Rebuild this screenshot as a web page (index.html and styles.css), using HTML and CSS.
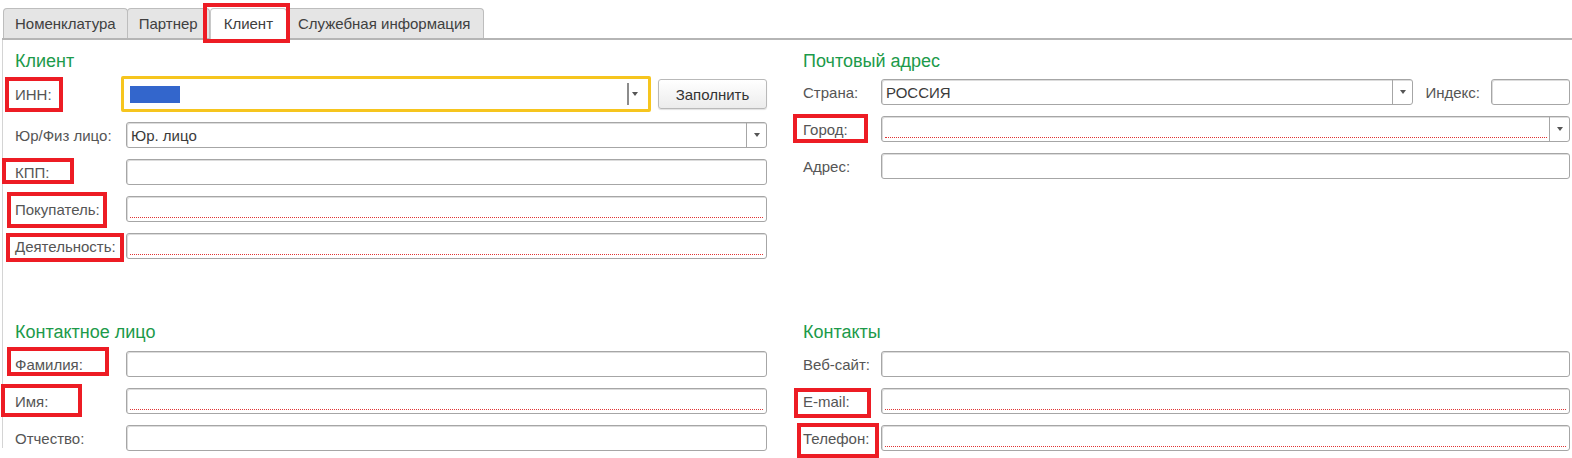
FILE: index.html
```html
<!DOCTYPE html>
<html lang="ru">
<head>
  <meta charset="UTF-8">
  <title>Клиент</title>
  <link rel="stylesheet" href="styles.css">
</head>
<body>
  <div class="page">
    <div class="tabs">
      <div class="tab">Номенклатура</div>
      <div class="tab">Партнер</div>
      <div class="tab active">Клиент</div>
      <div class="tab">Служебная информация</div>
    </div>

    <div class="panel">
      <!-- Клиент -->
      <div class="group group-left">
        <div class="group-title">Клиент</div>
        <div class="row row-inn">
          <div class="label">ИНН:</div>
          <div class="focus">
            <span class="selection"></span>
            <span class="dd dd-focus"><i class="arrow"></i></span>
          </div>
          <button class="btn">Заполнить</button>
        </div>
        <div class="row">
          <div class="label">Юр/Физ лицо:</div>
          <div class="field"><span class="value">Юр. лицо</span><span class="dd"><i class="arrow"></i></span></div>
        </div>
        <div class="row">
          <div class="label">КПП:</div>
          <div class="field"></div>
        </div>
        <div class="row">
          <div class="label">Покупатель:</div>
          <div class="field required"></div>
        </div>
        <div class="row">
          <div class="label">Деятельность:</div>
          <div class="field required"></div>
        </div>
      </div>

      <!-- Почтовый адрес -->
      <div class="group group-right">
        <div class="group-title">Почтовый адрес</div>
        <div class="row">
          <div class="label">Страна:</div>
          <div class="field"><span class="value">РОССИЯ</span><span class="dd"><i class="arrow"></i></span></div>
          <div class="label label-index">Индекс:</div>
          <div class="field field-index"></div>
        </div>
        <div class="row">
          <div class="label">Город:</div>
          <div class="field required with-dd"><span class="value"></span><span class="dd"><i class="arrow"></i></span></div>
        </div>
        <div class="row">
          <div class="label">Адрес:</div>
          <div class="field"></div>
        </div>
      </div>

      <!-- Контактное лицо -->
      <div class="group group-left">
        <div class="group-title title-low">Контактное лицо</div>
        <div class="row">
          <div class="label">Фамилия:</div>
          <div class="field"></div>
        </div>
        <div class="row">
          <div class="label">Имя:</div>
          <div class="field required"></div>
        </div>
        <div class="row">
          <div class="label">Отчество:</div>
          <div class="field"></div>
        </div>
      </div>

      <!-- Контакты -->
      <div class="group group-right">
        <div class="group-title title-low">Контакты</div>
        <div class="row">
          <div class="label">Веб-сайт:</div>
          <div class="field"></div>
        </div>
        <div class="row">
          <div class="label">E-mail:</div>
          <div class="field required"></div>
        </div>
        <div class="row">
          <div class="label">Телефон:</div>
          <div class="field required"></div>
        </div>
      </div>
    </div>

    <!-- пометки поверх формы -->
    <div class="mark mark-tab"></div>
    <div class="mark mark-inn"></div>
    <div class="mark mark-kpp"></div>
    <div class="mark mark-buyer"></div>
    <div class="mark mark-activity"></div>
    <div class="mark mark-surname"></div>
    <div class="mark mark-name"></div>
    <div class="mark mark-city"></div>
    <div class="mark mark-email"></div>
    <div class="mark mark-phone"></div>
  </div>
</body>
</html>
```

FILE: styles.css
```css
body {
  margin: 0;
  padding: 0;
  font-family: 'Liberation Sans', Arial, sans-serif;
  font-size: 15px;
  color: #555555;
  background-color: #ffffff;
  overflow: hidden;
}

.page {
  position: relative;
  height: 458px;
}

/* вкладки */
.tabs {
  display: flex;
  margin-left: 2px;
  padding: 8px 0 0 1px;
  border-bottom: 2px solid #b5b5b5;
  height: 30px;
}

.tab {
  box-sizing: border-box;
  height: 30px;
  line-height: 29px;
  padding: 0 11px 0 11px;
  margin-right: -1px;
  background-color: #e5e5e5;
  border: 1px solid #bdbdbd;
  border-bottom: none;
  border-radius: 4px 4px 0 0;
  color: #404040;
  white-space: nowrap;
}

.tab:last-child {
  padding-right: 13px;
}

.tab.active {
  height: 32px;
  margin-bottom: -2px;
  padding: 0 13px;
  margin-left: 1px;
  background-color: #ffffff;
  border-color: #c8c8c8;
  position: relative;
}

/* панель */
.panel {
  margin-left: 2px;
  border-left: 1px solid #d4d4d4;
  padding: 10px 0 0 12px;
  display: grid;
  grid-template-columns: 752px 767px;
  column-gap: 36px;
  row-gap: 51px;
  height: 408px;
  box-sizing: border-box;
  align-content: start;
}

.group-title {
  font-size: 18px;
  line-height: 22px;
  color: #1c9a4a;
  margin-bottom: 7px;
}

.group-title.title-low {
  margin-bottom: 8px;
}

.row {
  display: flex;
  align-items: center;
  height: 26px;
  margin-bottom: 11px;
}

.row-inn {
  height: 30px;
  margin-bottom: 13px;
}

.label {
  flex-shrink: 0;
  width: 111px;
  white-space: nowrap;
}

.group-right .label {
  width: 78px;
}

.group-right .label.label-index {
  width: auto;
  margin: 0 11px 0 12px;
}

.field {
  flex: 1;
  position: relative;
  box-sizing: border-box;
  height: 26px;
  display: flex;
  align-items: center;
  border: 1px solid #a6a6a6;
  border-radius: 3px;
  box-shadow: inset 1px 1px 0 #dcdcdc;
  background-color: #ffffff;
}

.field.field-index {
  flex: 0 0 79px;
}

.value {
  flex: 1;
  padding-left: 4px;
  color: #3a3a3a;
}

/* красная пунктирная линия обязательного поля */
.field.required::after {
  content: "";
  position: absolute;
  left: 3px;
  right: 3px;
  bottom: 3px;
  border-bottom: 1px dotted #e03434;
}

.field.required.with-dd::after {
  right: 22px;
}

.dd {
  flex: 0 0 19px;
  align-self: stretch;
  display: flex;
  align-items: center;
  justify-content: center;
  border-left: 1px solid #a6a6a6;
}

.arrow {
  display: block;
  width: 0;
  height: 0;
  border-top: 4px solid #555555;
  border-left: 3.5px solid transparent;
  border-right: 3.5px solid transparent;
}

/* поле ИНН в фокусе */
.focus {
  box-sizing: border-box;
  flex: 0 0 530px;
  height: 36px;
  margin-left: -5px;
  border: 3px solid #f6c51e;
  border-radius: 2px;
  display: flex;
  align-items: center;
}

.selection {
  display: block;
  width: 50px;
  height: 17px;
  margin-left: 6px;
  background-color: #3366cc;
}

.dd-focus {
  margin-left: auto;
  align-self: center;
  height: 22px;
  border-left: 2px solid #8c8c8c;
  justify-content: flex-start;
  padding-left: 3px;
  flex: 0 0 16px;
}

.btn {
  box-sizing: border-box;
  margin-left: 7px;
  width: 109px;
  height: 30px;
  border: 1px solid #b9b9b9;
  border-radius: 3px;
  background: linear-gradient(#ffffff, #ececec);
  box-shadow: 0 1px 1px rgba(0, 0, 0, 0.12);
  font-family: 'Liberation Sans', Arial, sans-serif;
  font-size: 15px;
  color: #333333;
  padding: 0;
}

/* красные рамки-пометки */
.mark {
  position: absolute;
  box-sizing: border-box;
  border: 4px solid #ed1c24;
  pointer-events: none;
}

.mark-tab { left: 203px; top: 3px; width: 87px; height: 40px; }
.mark-inn { left: 5px; top: 77px; width: 58px; height: 35px; }
.mark-kpp { left: 2px; top: 158px; width: 72px; height: 26px; }
.mark-buyer { left: 7px; top: 192px; width: 100px; height: 36px; }
.mark-activity { left: 6px; top: 233px; width: 118px; height: 29px; }
.mark-surname { left: 7px; top: 347px; width: 102px; height: 29px; }
.mark-name { left: 1px; top: 384px; width: 81px; height: 33px; }
.mark-city { left: 793px; top: 114px; width: 75px; height: 29px; }
.mark-email { left: 794px; top: 388px; width: 77px; height: 30px; }
.mark-phone { left: 797px; top: 423px; width: 82px; height: 35px; }
```
